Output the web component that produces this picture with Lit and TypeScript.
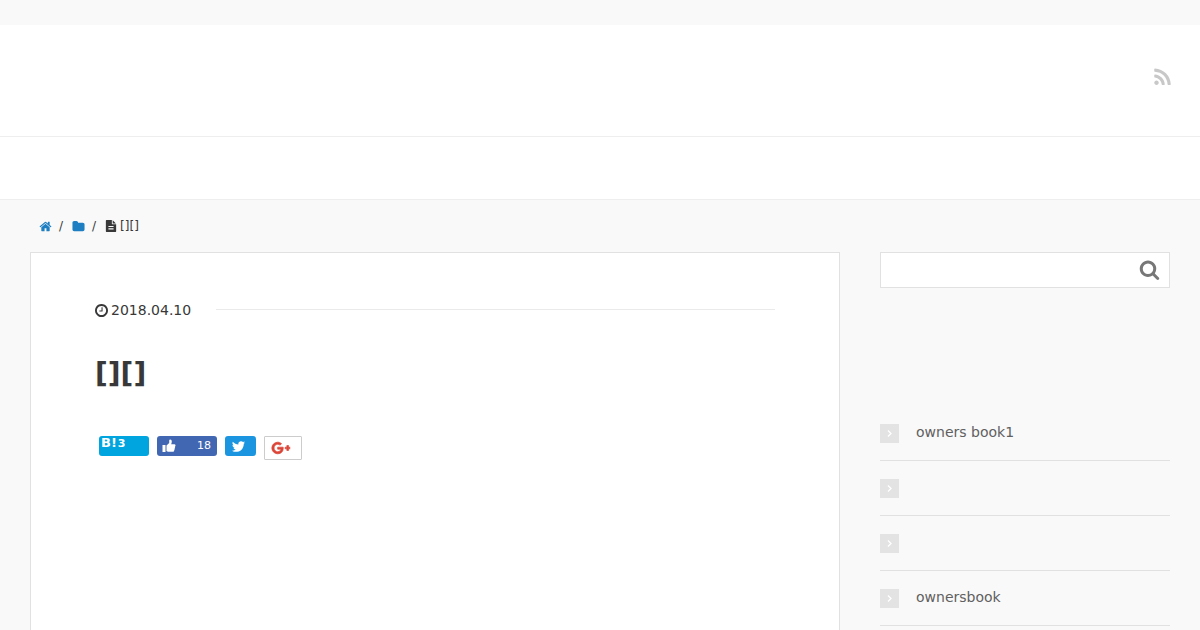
import { LitElement, html, css, svg } from "lit";
import { customElement } from "lit/decorators.js";

const paths = {
  home: "M1472 992v480q0 26-19 45t-45 19h-384v-384h-256v384h-384q-26 0-45-19t-19-45v-480q0-1 .5-3t.5-3l575-474 575 474q1 2 1 6zm223-69l-62 74q-8 9-21 11h-3q-13 0-21-7l-692-577-692 577q-12 8-24 7-13-2-21-11l-62-74q-8-10-7-23.5t11-21.5l719-599q32-26 76-26t76 26l244 204v-195q0-14 9-23t23-9h192q14 0 23 9t9 23v408l219 182q10 8 11 21.5t-7 23.5z",
  folder: "M1728 608v704q0 92-66 158t-158 66h-1216q-92 0-158-66t-66-158v-960q0-92 66-158t158-66h320q92 0 158 66t66 158v32h672q92 0 158 66t66 158z",
  file: "M1596 476q14 14 28 36h-472v-472q22 14 36 28zm-476 164h544v1056q0 40-28 68t-68 28h-1344q-40 0-68-28t-28-68v-1600q0-40 28-68t68-28h800v544q0 40 28 68t68 28zM1280 1408v-160h-768v160zM1280 1056v-160h-768v160z",
  clock: "M1024 544v448q0 14-9 23t-23 9h-320q-14 0-23-9t-9-23v-64q0-14 9-23t23-9h224v-352q0-14 9-23t23-9h64q14 0 23 9t9 23zm416 352q0-148-73-273t-198-198-273-73-273 73-198 198-73 273 73 273 198 198 273 73 273-73 198-198 73-273zm224 0q0 209-103 385.5t-279.5 279.5-385.5 103-385.5-103-279.5-279.5-103-385.5 103-385.5 279.5-279.5 385.5-103 385.5 103 279.5 279.5 103 385.5z",
  rss: "M576 1344q0 80-56 136t-136 56-136-56-56-136 56-136 136-56 136 56 56 136zm512 123q2 28-17 48-18 21-47 21h-135q-25 0-43-16.5t-20-41.5q-22-229-184.5-391.5t-391.5-184.5q-25-2-41.5-20t-16.5-43v-135q0-29 21-47 17-17 43-17h5q160 13 306 80.5t259 181.5q114 113 181.5 259t80.5 306zm512 2q2 27-18 47-18 20-46 20h-143q-26 0-44.5-17.5t-19.5-42.5q-12-215-101-408.5t-231.5-336-336-231.5-408.5-102q-25-1-42.5-19.5t-17.5-43.5v-143q0-28 20-46 18-18 44-18h3q262 13 501.5 120t425.5 294q187 186 294 425.5t120 501.5z",
  search: "M1216 832q0-185-131.5-316.5t-316.5-131.5-316.5 131.5-131.5 316.5 131.5 316.5 316.5 131.5 316.5-131.5 131.5-316.5zm512 832q0 52-38 90t-90 38q-54 0-90-38l-343-342q-179 124-399 124-143 0-273.5-55.5t-225-150-150-225-55.5-273.5 55.5-273.5 150-225 225-150 273.5-55.5 273.5 55.5 225 150 150 225 55.5 273.5q0 220-124 399l343 343q37 37 37 90z",
  twitter: "M1684 408q-67 98-162 167 1 14 1 42 0 130-38 259.5t-115.5 248.5-184.5 210.5-258 146-323 54.5q-271 0-496-145 35 4 78 4 225 0 401-138-105-2-188-64.5t-114-159.5q33 5 61 5 43 0 85-11-112-23-185.5-111.5t-73.5-205.5v-4q68 38 146 41-66-44-105-115t-39-154q0-88 44-163 121 149 294.5 238.5t371.5 99.5q-8-38-8-74 0-134 94.5-228.5t228.5-94.5q140 0 236 102 109-21 205-78-37 115-142 178 93-10 186-50z",
  thumb: "M.5 6h3v7h-3zM4.500 6.500L7.200 4.100V1.600Q7.200.5 8.300.5 9.800.5 9.800 2.400 9.800 3.600 9.200 5.200H12.300Q13.500 5.200 13.500 6.400 13.500 7.100 13 7.500 13.400 8.100 12.700 9.300 13 10.100 12.300 10.900 12.400 12.800 10.700 12.800H7.500Q6 12.800 4.500 11.900z",
  gplus: "M23 11h-2V9h-2v2h-2v2h2v2h2v-2h2M8 11v2.4h3.970c-.16 1.030-1.200 3.020-3.970 3.020-2.390 0-4.340-1.980-4.340-4.420S5.610 7.580 8 7.580c1.360 0 2.270.58 2.790 1.080l1.900-1.830C11.470 5.690 9.890 5 8 5c-3.870 0-7 3.130-7 7s3.130 7 7 7c4.040 0 6.720-2.840 6.720-6.840 0-.46-.05-.81-.11-1.160H8z",
};

const icon = (name: keyof typeof paths, size: number, box = "0 0 1792 1792") => html`
  <svg width=${size} height=${size} viewBox=${box} fill="currentColor" aria-hidden="true">
    ${svg`<path d=${paths[name]} fill-rule=${name === "file" ? "evenodd" : "nonzero"}></path>`}
  </svg>`;

const links = ["owners book1", "", "", "ownersbook", ""];

@customElement("app-root")
export class AppRoot extends LitElement {
  static styles = css`
    :host {
      display: block;
      height: 100vh;
      overflow: hidden;
      background: #f9f9f9;
      color: #383838;
      font: 14px/20px "DejaVu Sans", Verdana, sans-serif;
    }
    *, *::before { box-sizing: border-box; }
    a { color: inherit; text-decoration: none; }
    svg { display: block; flex: none; }
    .top { height: 25px; }
    .header {
      display: flex;
      align-items: center;
      justify-content: flex-end;
      height: 112px;
      padding: 0 27px;
      background: #fff;
      border-bottom: 1px solid #eee;
    }
    .rss { color: #c8c8c8; padding-bottom: 6px; }
    .nav { height: 63px; background: #fff; border-bottom: 1px solid #eee; }
    .wrap { max-width: 1140px; margin: 0 auto; }
    .crumbs {
      display: flex;
      align-items: center;
      height: 52px;
      padding: 0 9px;
      font-size: 12px;
    }
    .crumbs a { color: #1e7ec2; }
    .sep { padding: 0 9px 0 7px; }
    .current { display: flex; align-items: center; gap: 3px; }
    .columns {
      display: grid;
      grid-template-columns: minmax(0, 1fr) 290px;
      gap: 40px;
    }
    .article {
      min-height: 600px;
      padding: 47px 64px;
      background: #fff;
      border: 1px solid #e1e1e1;
    }
    .meta { display: flex; align-items: center; gap: 25px; }
    .date { display: flex; align-items: center; gap: 3px; }
    .rule { flex: 1; height: 1px; margin-bottom: 2px; background: #eaeaea; }
    h1 { margin: 34px 0 0; font-size: 28px; line-height: 40px; }
    .share {
      display: flex;
      align-items: flex-start;
      gap: 8px;
      margin-top: 42px;
      padding-left: 4px;
      color: #fff;
      font-size: 11px;
    }
    .share a { display: flex; align-items: center; height: 20px; border-radius: 3px; }
    .share .hatena {
      align-items: baseline;
      width: 50px;
      padding: 0 2px;
      gap: 1px;
      background: #00a4de;
      font-weight: bold;
      line-height: 14px;
    }
    .mark { font-size: 13px; }
    .share .like {
      justify-content: space-between;
      width: 60px;
      padding: 0 6px 0 5px;
      background: #4267b2;
      line-height: 22px;
    }
    .share .tweet { justify-content: center; width: 31px; padding-right: 4px; background: #1b95e0; }
    .share .plus {
      width: 38px;
      height: 24px;
      padding-left: 6px;
      background: #fff;
      border: 1px solid #ccc;
      border-radius: 1px;
      color: #db4437;
    }
    .plus path { stroke: currentColor; stroke-width: 0.8; }
    .search {
      display: flex;
      align-items: center;
      height: 36px;
      background: #fff;
      border: 1px solid #e1e1e1;
    }
    .search input {
      flex: 1;
      min-width: 0;
      height: 34px;
      padding: 0 10px;
      border: 0;
      outline: 0;
      background: none;
      font: inherit;
    }
    .search button { padding: 0 9px 2px; border: 0; background: none; color: #777; }
    ul { margin: 118px 0 0; padding: 0; list-style: none; }
    li { border-bottom: 1px solid #e1e1e1; }
    li a {
      display: flex;
      align-items: center;
      gap: 17px;
      height: 54px;
      color: #606060;
    }
    .arrow {
      display: grid;
      place-items: center;
      width: 19px;
      height: 19px;
      background: #e3e3e3;
    }
    .label { padding-bottom: 2px; }
  `;

  render() {
    return html`
      <div class="top"></div>
      <header class="header"><a class="rss" href="#" aria-label="RSS">${icon("rss", 21)}</a></header>
      <nav class="nav"></nav>
      <div class="wrap">
        <div class="crumbs">
          <a href="#" aria-label="Home">${icon("home", 13)}</a><span class="sep">/</span>
          <a href="#" aria-label="Category">${icon("folder", 13)}</a><span class="sep">/</span>
          <span class="current">${icon("file", 12)}[][]</span>
        </div>
        <div class="columns">
          <main class="article">
            <div class="meta">
              <time class="date" datetime="2018-04-10">${icon("clock", 13, "128 128 1536 1536")}2018.04.10</time>
              <span class="rule"></span>
            </div>
            <h1>[][]</h1>
            <div class="share">
              <a class="hatena" href="#"><span class="mark">B!</span><span>3</span></a>
              <a class="like" href="#" aria-label="Like 18">${icon("thumb", 14, "0 0 14 14")}<span>18</span></a>
              <a class="tweet" href="#" aria-label="Twitter">${icon("twitter", 15)}</a>
              <a class="plus" href="#" aria-label="Google+">${icon("gplus", 20, "0 0 24 24")}</a>
            </div>
          </main>
          <aside>
            <form class="search" role="search">
              <input type="text" aria-label="Search" />
              <button type="button" aria-label="Search">${icon("search", 21)}</button>
            </form>
            <ul>
              ${links.map((text) => html`
                <li><a href="#" aria-label=${text || "Link"}>
                  <span class="arrow">
                    <svg width="7" height="9" viewBox="0 0 7 9" fill="none" stroke="#fff" stroke-width="1.3"><path d="M2 1.5l3 3-3 3"></path></svg>
                  </span>
                  <span class="label">${text}</span>
                </a></li>`)}
            </ul>
          </aside>
        </div>
      </div>`;
  }
}
